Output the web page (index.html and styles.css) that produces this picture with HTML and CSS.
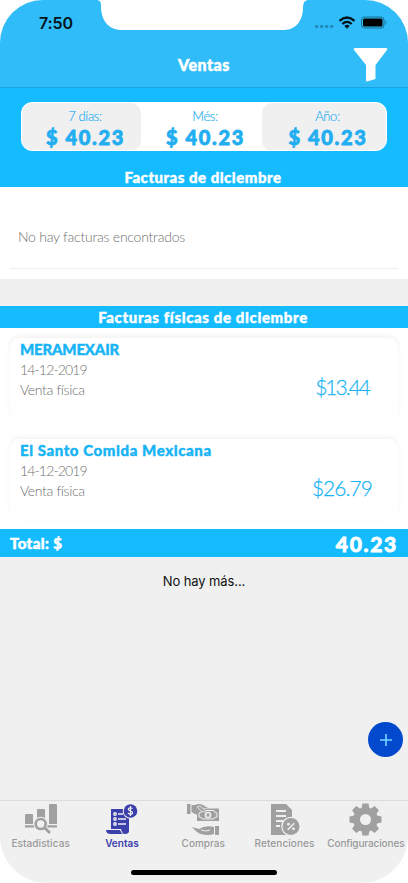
FILE: index.html
```html
<!DOCTYPE html>
<html lang="es">
<head>
<meta charset="utf-8">
<title>Ventas</title>
<link rel="stylesheet" href="styles.css">
</head>
<body>
<div class="screen">
  <header class="header">
    <svg class="notch" width="216" height="31" viewBox="0 0 216 31"><path d="M0 0C4 0 5 2 5 6C5 20 12 30 26 30H188C201 30 207 19 207 8C207 2 209 0 213 0Z" fill="#fff"/></svg>
    <div class="status">
      <span class="time">7:50</span>
      <svg width="76" height="16" viewBox="0 0 76 16">
        <g fill="#218bb9"><rect x="1" y="9" width="3.4" height="3" rx="1"/><rect x="6" y="9" width="3.4" height="3" rx="1"/><rect x="11" y="9" width="3.4" height="3" rx="1"/><rect x="16" y="9" width="3.4" height="3" rx="1"/></g>
        <g fill="none" stroke="#06131b" stroke-width="2.300"><path d="M25.500 4.800Q33 -1.800 40.500 4.800"/><path d="M28.300 8Q33 3.800 37.700 8"/></g><path d="M30.300 9.800Q33 7.500 35.700 9.800L33 12.700Z" fill="#06131b"/>
        <rect x="47.500" y="1" width="22.500" height="11" rx="3" fill="none" stroke="#176c91"/><rect x="49" y="2.500" width="19.500" height="8" rx="1.500"/><path d="M71.500 4.500Q73.500 6.500 71.500 8.500Z" fill="#176c91"/>
      </svg>
    </div>
    <div class="navbar">
      <h1>Ventas</h1>
      <svg class="filter" width="36" height="36" viewBox="0 0 36 36"><path d="M2 1H33Q35 1 34 3L22.500 18V32L14 34.500Q13 34.700 13 33V18L1 3Q0 1 2 1Z" fill="#fff"/></svg>
    </div>
  </header>
  <section class="summary">
    <div class="periods">
      <div class="period shade"><span>7 días:</span><b>$ 40.23</b></div>
      <div class="period"><span>Més:</span><b>$ 40.23</b></div>
      <div class="period shade"><span>Año:</span><b>$ 40.23</b></div>
    </div>
    <h2><span class="t1">Facturas de diciembre</span></h2>
  </section>
  <section class="empty"><p>No hay facturas encontrados</p></section>
  <h2 class="band"><span class="t2">Facturas físicas de diciembre</span></h2>
  <section class="list">
    <article class="card">
      <div class="info"><h3 class="n1">MERAMEXAIR</h3><p class="date">14-12-2019</p><p class="kind">Venta física</p></div>
      <span class="amount a1">$13.44</span>
    </article>
    <article class="card">
      <div class="info"><h3 class="n2">El Santo Comida Mexicana</h3><p class="date">14-12-2019</p><p class="kind">Venta física</p></div>
      <span class="amount a2">$26.79</span>
    </article>
  </section>
  <div class="total"><span>Total: $</span><b>40.23</b></div>
  <main class="rest">
    <p>No hay más...</p>
    <button class="add" aria-label="Agregar"><svg width="14" height="14" viewBox="0 0 14 14"><path d="M7 1V13M1 7H13" stroke="#76d5ff" stroke-width="1.600"/></svg></button>
  </main>
  <nav class="tabs">
    <a class="tab">
      <svg width="34" height="34" viewBox="0 0 34 34" fill="#a0a0a0"><path d="M1 12Q1 11 2 11H8Q9 11 9 12V21H1ZM13 7Q13 6 14 6H20Q21 6 21 7V21H13ZM25 2Q25 1 26 1H32Q33 1 33 2V21H25ZM1 22.300H33V24.500H1Z"/><circle cx="16.700" cy="21" r="7.200" fill="#f0f0f0"/><circle cx="16.700" cy="21" r="5" fill="#f0f0f0" stroke="#a0a0a0" stroke-width="2.600"/><path d="M20.300 24.500L26 30" stroke="#a0a0a0" stroke-width="2.800"/></svg>
      <span>Estadisticas</span></a>
    <a class="tab active">
      <svg width="34" height="34" viewBox="0 0 34 34" fill="#3b3fac"><path d="M6 6H24V28Q24 31 20 31Q17 31 16 26H6Z"/><path d="M1 27H15Q16 30 18 31H6Q1 31 1 27Z"/><circle cx="25.500" cy="8" r="7.800" fill="#f0f0f0"/><circle cx="25.500" cy="8" r="6.800"/><g stroke="#f0f0f0" stroke-width="1.400" fill="none"><circle cx="10" cy="11" r="1.200"/><circle cx="10" cy="16" r="1.200"/><circle cx="10" cy="21" r="1.200"/><path d="M13 11H18M13 16H21M13 21H21"/><path d="M27.500 5.700Q26.500 4.500 25 4.800C22.500 5.200 23 7.500 25.500 8C28.500 8.600 28 11.200 25.500 11.200Q24 11.200 23 10M25.500 3V13" stroke-width="1.200"/></g></svg>
      <span>Ventas</span></a>
    <a class="tab">
      <svg width="34" height="34" viewBox="0 0 34 34" fill="#a0a0a0"><path d="M1 1H4.500V11H1ZM5.500 2H9Q13 0 17 2L22 5H12V12Q8 11 5.500 9Z"/><path d="M11 5.500H33V18H11Z"/><path d="M16 7.500H28Q28 10 31 10V14Q28 14 28 16H16Q16 14 13 14V10Q16 10 16 7.500Z" fill="none" stroke="#f0f0f0" stroke-width="1"/><circle cx="22" cy="12" r="3.300" fill="#f0f0f0"/><ellipse cx="22" cy="12" rx="1.500" ry="2"/><path d="M11 4L15 8Q19 10 20 8L14 3Z" stroke="#f0f0f0" stroke-width=".8"/><path d="M6 24L13 26Q19 22 28 24V31Q22 33 15 31Q11 30 6 24ZM29 23H33V32H29Z"/><path d="M15 27Q20 29 24 27" fill="none" stroke="#f0f0f0"/></svg>
      <span>Compras</span></a>
    <a class="tab">
      <svg width="34" height="34" viewBox="0 0 34 34" fill="#a0a0a0"><path d="M3 1H18L24 7V32H3Z"/><path d="M8 8H18M8 13H18M8 18H15M8 23H12" stroke="#f0f0f0" stroke-width="1.800"/><circle cx="23" cy="23.500" r="9.800" fill="#f0f0f0"/><circle cx="23" cy="23.500" r="8.500"/><path d="M26.300 20.200L19.700 26.800" stroke="#f0f0f0" stroke-width="1.600"/><circle cx="20.500" cy="21.200" r="1.400" fill="#f0f0f0"/><circle cx="25.500" cy="25.800" r="1.400" fill="#f0f0f0"/></svg>
      <span>Retenciones</span></a>
    <a class="tab">
      <svg width="34" height="34" viewBox="0 0 34 34"><g fill="#a0a0a0" transform="translate(16.500 16.500)"><circle r="12.300"/><g id="teeth"><path id="tooth" d="M-4 -11L-3 -16H3L4 -11ZM-4 11L-3 16H3L4 11Z"/><use href="#tooth" transform="rotate(45)"/></g><use href="#teeth" transform="rotate(90)"/><circle r="5.500" fill="#f0f0f0"/></g></svg>
      <span>Configuraciones</span></a>
    <i class="home"></i>
  </nav>
</div>
</body>
</html>
```
FILE: styles.css
```css
* { box-sizing: border-box; margin: 0; padding: 0; }
body { background: #fff; font-family: Lato, "Liberation Sans", sans-serif; }
.screen { width: 408px; height: 883px; display: flex; flex-direction: column; overflow: hidden; background: #f0f0f0; border-radius: 43px 43px 47px 47px; }
.header { position: relative; height: 88px; background: #2fbcf8; border-bottom: 1px solid #19a3df; flex: none; }
.notch { position: absolute; left: 96px; top: 0; }
.status { display: flex; justify-content: space-between; height: 44px; padding: 15px 18px 0 39px; }
.status svg { margin-top: 1px; }
.time { font: 600 16px/16px Inter, sans-serif; letter-spacing: -.1px; color: #06131b; }
.navbar { display: grid; grid-template-columns: 1fr auto 1fr; height: 43px; }
.navbar h1 { grid-column: 2; font-size: 16px; line-height: 42px; font-weight: 900; letter-spacing: .5px; color: #fff; -webkit-text-stroke: .5px #fff; }
.filter { justify-self: end; margin: 3px 19px 0 0; }
.summary { height: 99px; padding-top: 14px; background: #15bbff; flex: none; }
.periods { display: grid; grid-template-columns: 119px 121px 124px; width: 366px; height: 49px; margin: 0 auto; background: #fff; border: 1px solid #fff; border-radius: 11px; overflow: hidden; }
.period { display: flex; flex-direction: column; align-items: center; padding-top: 5px; color: #22aef0; border-radius: 10px; }
.period span { padding-left: 7px; font-size: 13px; line-height: 16px; font-weight: 300; letter-spacing: -.35px; -webkit-text-stroke: .15px; }
.period b { padding-left: 8px; font-size: 20px; line-height: 27px; font-weight: 900; letter-spacing: 1.650px; white-space: nowrap; -webkit-text-stroke: .8px; }
.shade { background: #f0f0f0; }
h2 { font-size: 15px; font-weight: 900; text-align: center; color: #fff; -webkit-text-stroke: .4px #fff; }
.t1 { margin-right: 2px; letter-spacing: .5px; }
.t2 { margin-right: 2px; letter-spacing: .62px; }
.summary h2 { padding-top: 15px; line-height: 22px; }
.empty { height: 92px; margin-bottom: 27px; padding: 41px 10px 0; background: #fff; flex: none; }
.empty p { height: 41px; padding-left: 8px; border-bottom: 1px solid #eee; font-size: 14px; line-height: 18px; font-weight: 300; letter-spacing: -.24px; color: #707070; }
.band { height: 22px; line-height: 23px; background: #15bbff; flex: none; }
.list { display: flex; flex-direction: column; gap: 18px; height: 201px; padding: 10px 10px 0; background: #fff; flex: none; }
.card { display: flex; justify-content: space-between; height: 82.500px; padding: 1px 26px 0 10px; border-radius: 10px; background: linear-gradient(#fff 75%, #fefefe); box-shadow: 0 -2px 5px #f2f2f2; }
.card h3 { font-size: 15px; line-height: 21px; font-weight: 900; color: #18b4f5; -webkit-text-stroke: .4px; }
.n1 { letter-spacing: -.2px; }
.n2 { letter-spacing: .58px; }
.card p { font-size: 14px; line-height: 20px; font-weight: 300; color: #707070; }
.card .date { letter-spacing: -.85px; }
.card .kind { letter-spacing: -.35px; }
.amount { padding-top: 35px; font-size: 21px; line-height: 26px; font-weight: 300; color: #18b4f5; -webkit-text-stroke: .25px; }
.a1 { padding-right: 3px; letter-spacing: -2px; }
.a2 { letter-spacing: -.95px; }
.total { display: flex; align-items: center; justify-content: space-between; height: 28px; padding: 0 10px 0 10px; background: #15bbff; color: #fff; font-weight: 900; -webkit-text-stroke: .5px; flex: none; }
.total span { font-size: 15px; letter-spacing: .4px; }
.total b { font-size: 21px; font-weight: 900; letter-spacing: 1.700px; -webkit-text-stroke: .8px; }
.rest { position: relative; flex: 1; padding-top: 16px; text-align: center; font: 13px/17px Inter, sans-serif; letter-spacing: -.1px; color: #111; }
.add { position: absolute; right: 5px; bottom: 43px; width: 35px; height: 35px; border: 0; border-radius: 50%; background: #0349ce; display: grid; place-items: center; }
.tabs { position: relative; display: grid; grid-template-columns: repeat(5, 81.300px); height: 83px; border-top: 1px solid #dcdcdc; flex: none; }
.tab { display: flex; flex-direction: column; align-items: center; padding-top: 2px; font: 500 10px/12px Inter, sans-serif; color: #999; letter-spacing: 0; }
.tab:nth-child(1) { letter-spacing: .08px; }
.tab:nth-child(4) { letter-spacing: .08px; }
.tab:nth-child(5) { letter-spacing: -.13px; }
.active { color: #3b3fac; font-weight: 600; }
.home { position: absolute; left: 131px; bottom: 8px; width: 146px; height: 5px; border-radius: 3px; background: #000; }
```
